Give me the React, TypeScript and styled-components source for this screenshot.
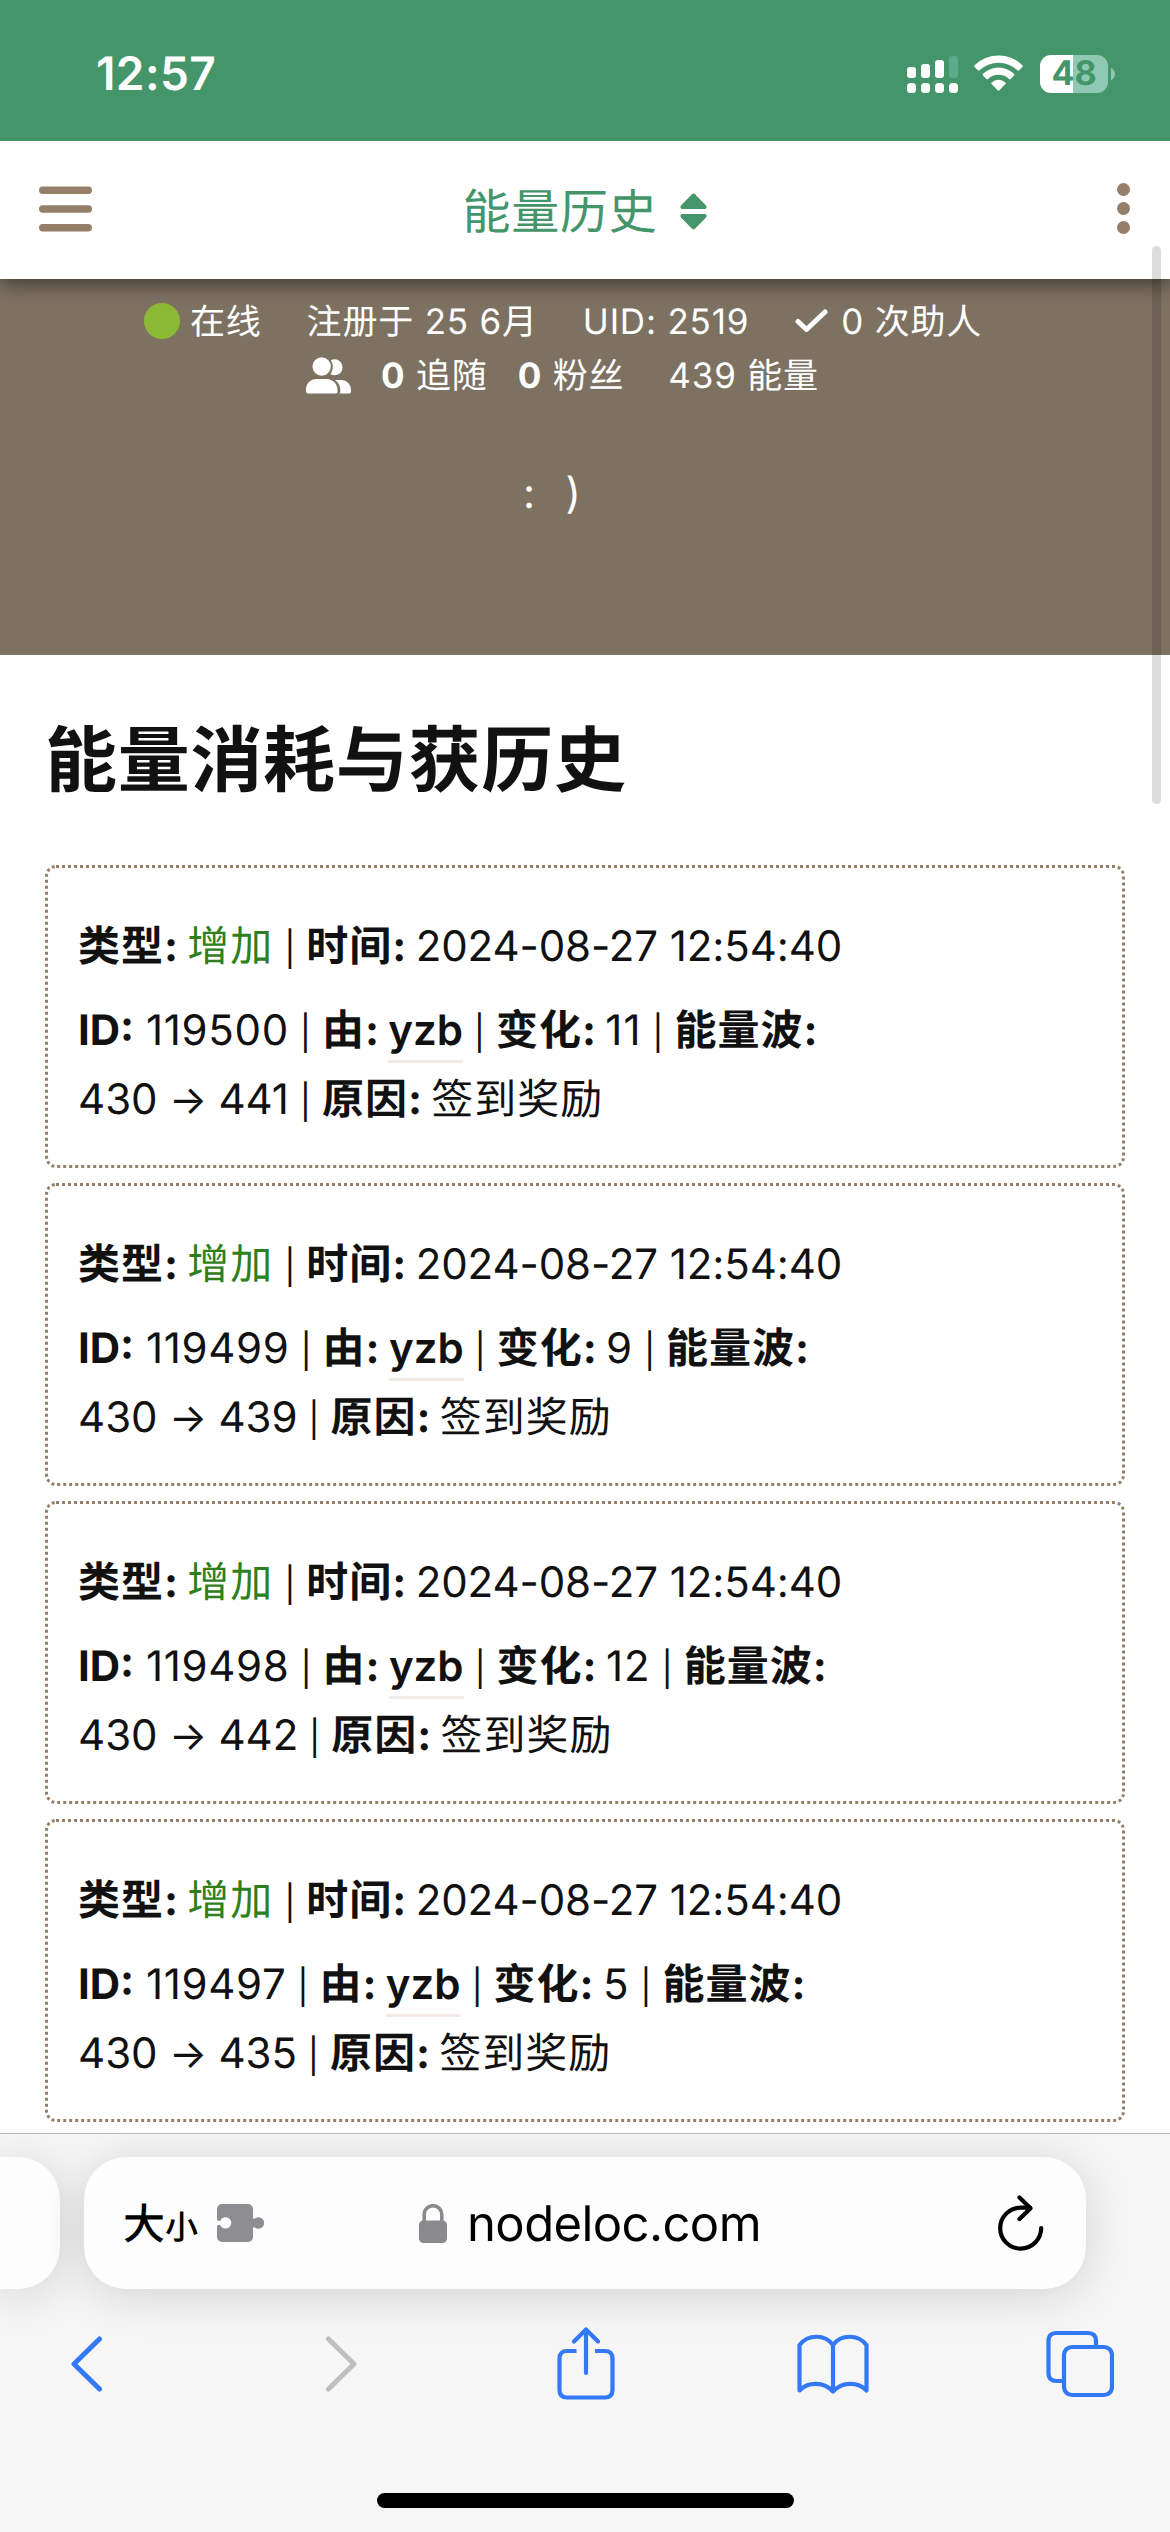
import React from "react";
import styled, { createGlobalStyle } from "styled-components";

const GlobalStyle = createGlobalStyle`
  *, *::before, *::after { box-sizing: border-box; }
  body {
    margin: 0;
    background: #fff;
    font-family: Inter, "Noto Sans CJK SC", sans-serif;
    color: #111;
    text-rendering: geometricPrecision;
  }
  p, h1 { margin: 0; }
`;

const Screen = styled.div`
  position: relative;
  width: 1170px;
  height: 2532px;
  overflow: hidden;
  display: flex;
  flex-direction: column;
  background: #fff;
`;

const StatusBar = styled.header`
  flex: none;
  position: relative;
  z-index: 2;
  height: 141px;
  display: flex;
  align-items: center;
  justify-content: space-between;
  padding: 7px 55px 0 96px;
  background: #44966a;
  color: #fff;
`;

const Clock = styled.span`
  font-size: 46px;
  font-weight: 600;
  line-height: 54px;
  letter-spacing: 0.4px;
`;

const StatusIcons = styled.div`
  display: flex;
  align-items: center;
`;

const WifiGlyph = styled.svg`
  margin-left: 16px;
`;

const Battery = styled.div`
  display: flex;
  align-items: center;
  gap: 3px;
  margin-left: 17px;
`;

const BatteryBody = styled.div<{ $level: number }>`
  width: 68px;
  height: 38px;
  border-radius: 11px;
  background: linear-gradient(90deg, #fff ${(p) => p.$level}%, #8fc9b3 ${(p) => p.$level}%);
  color: #44966a;
  font-size: 34px;
  font-weight: 700;
  line-height: 38px;
  text-align: center;
`;

const TopBar = styled.nav`
  flex: none;
  position: relative;
  z-index: 1;
  height: 138px;
  display: grid;
  grid-template-columns: 1fr auto 1fr;
  align-items: center;
  padding: 0 40px 0 39px;
  background: #fff;
  box-shadow: 0 6px 18px rgba(0, 0, 0, 0.45);
`;

const MenuIcon = styled.svg`
  margin-bottom: 3px;
`;

const MoreIcon = styled.svg`
  justify-self: end;
  margin-bottom: 3px;
`;

const PageTitle = styled.div`
  display: flex;
  align-items: center;
  gap: 22px;
  padding-top: 3px;
  color: #44966a;
  font-size: 48px;
  line-height: 72px;
  letter-spacing: 0.8px;
`;

const Profile = styled.section`
  flex: none;
  height: 376px;
  padding-top: 15px;
  background: #7d7162;
  color: #fff;
  font-size: 35px;
  line-height: 54px;
  letter-spacing: 0.8px;
`;

const ProfileRow = styled.div<{ $left: number }>`
  display: flex;
  align-items: center;
  height: 54px;
  padding-left: ${(p) => p.$left}px;
  white-space: pre;
`;

const Stat = styled.span<{ $gap?: number }>`
  margin-left: ${(p) => p.$gap ?? 0}px;
  padding-top: 2px;
  b { font-weight: 700; }
`;

const OnlineDot = styled.i`
  width: 36px;
  height: 36px;
  margin-right: 10px;
  border-radius: 50%;
  background: #8cb935;
`;

const CheckGlyph = styled.svg`
  margin: 0 13px 0 46px;
`;

const Signature = styled.p`
  padding: 65px 0 0 523px;
  font-size: 42px;
  line-height: 54px;
  word-spacing: 17px;
`;

const Content = styled.main`
  flex: 1;
  min-height: 0;
  padding: 0 45px;
`;

const Heading = styled.h1`
  padding-top: 52px;
  height: 210px;
  font-size: 72px;
  font-weight: 600;
  line-height: 108px;
  letter-spacing: 0.7px;
`;

const Records = styled.div`
  display: flex;
  flex-direction: column;
  gap: 15px;
`;

const Card = styled.article`
  height: 303px;
  padding: 44px 30px;
  border: 3px dotted #957f68;
  border-radius: 11px;
  display: flex;
  flex-direction: column;
  gap: 15px;
`;

const Line = styled.p`
  font-size: 42px;
  line-height: 69px;
  white-space: pre;
`;

const Row = styled.span`
  display: block;
  height: 69px;
`;

const Label = styled.b<{ $latin?: boolean }>`
  font-weight: 700;
  letter-spacing: ${(p) => (p.$latin ? 0 : 1)}px;
  margin-right: ${(p) => (p.$latin ? 0 : -3.5)}px;
`;

const Value = styled.span<{ $spacing: number }>`
  letter-spacing: ${(p) => p.$spacing}px;
`;

const Kind = styled(Value)`
  color: #2f7f1c;
`;

const BarText = styled.span`
  display: inline-block;
  width: 33px;
  font-size: 34px;
  line-height: 40px;
  text-align: center;
`;

const Arrow = styled.span`
  font-size: 40px;
  margin: 0 -0.5px;
`;

const User = styled.a`
  font-weight: 600;
  padding-bottom: 4px;
  border-bottom: 3px solid #f3e9e5;
`;

const Scrollbar = styled.div`
  position: absolute;
  z-index: 2;
  top: 246px;
  left: 1152px;
  width: 9px;
  height: 558px;
  border-radius: 5px;
  background: rgba(0, 0, 0, 0.135);
`;

const BrowserBar = styled.footer`
  flex: none;
  position: relative;
  height: 399px;
  overflow: hidden;
  border-top: 1px solid #b8b8b8;
  background: #f6f6f6;
  display: flex;
  flex-direction: column;
`;

const AddressRow = styled.div`
  display: flex;
  gap: 24px;
  padding-top: 23px;
`;

const Pill = styled.div`
  height: 132px;
  border-radius: 42px;
  background: #fdfdfd;
  box-shadow: 0 6px 46px rgba(0, 0, 0, 0.15);
`;

const PreviousTab = styled(Pill)`
  width: 60px;
  border-radius: 0 42px 42px 0;
`;

const Address = styled(Pill)`
  width: 1002px;
  display: flex;
  align-items: center;
  padding: 0 42px 0 39px;
`;

const TextSize = styled.span`
  display: flex;
  align-items: baseline;
  width: 94px;
  font-family: "Noto Sans CJK SC", sans-serif;
  font-size: 42px;
  font-weight: 500;
  line-height: 60px;
  color: #000;
  small { font-size: 33px; }
`;

const Host = styled.span`
  flex: 1;
  display: flex;
  align-items: center;
  gap: 20px;
  margin-left: 154px;
  font-size: 49px;
  line-height: 60px;
  letter-spacing: -0.6px;
  color: #000;
`;

const HostName = styled.span`
  padding-top: 2px;
`;

const Toolbar = styled.div`
  display: flex;
  align-items: center;
  height: 80px;
  margin-top: 35px;
`;

const Tool = styled.svg<{ $gap: number }>`
  flex: none;
  margin-left: ${(p) => p.$gap}px;
  fill: none;
  stroke: #3379f7;
  stroke-linejoin: round;
`;

const ForwardTool = styled(Tool)`
  stroke: #bfbfbf;
`;

const HomeIndicator = styled.div`
  width: 417px;
  height: 15px;
  margin: 89px auto 0;
  border-radius: 8px;
  background: #000;
`;

const records = [
  { id: 119500, change: 11, after: 441 },
  { id: 119499, change: 9, after: 439 },
  { id: 119498, change: 12, after: 442 },
  { id: 119497, change: 5, after: 435 },
];

const Bar = () => <BarText>|</BarText>;

const SignalIcon = () => (
  <svg width="51" height="38" viewBox="0 0 51 38" fill="#fff">
    <rect x="0" y="12" width="9" height="11" rx="3" />
    <rect x="14" y="9" width="9" height="14" rx="3" />
    <rect x="28" y="5" width="9" height="18" rx="3" />
    <rect x="42" y="1" width="9" height="22" rx="3" fill="#5aab87" />
    {[0, 14, 28, 42].map((x) => (
      <rect key={x} x={x} y="28" width="9" height="10" rx="3.5" />
    ))}
  </svg>
);

const WifiIcon = () => (
  <WifiGlyph width="49" height="38" viewBox="0 0 49 38" fill="#fff">
    <path d="M.6 10.200a34.500 34.500 0 0 1 47.800 0q.9.900 0 1.800l-3.300 3.300q-.8.800-1.600 0a27.500 27.500 0 0 0-38 0q-.8.800-1.600 0L.6 12q-.9-.9 0-1.800z" />
    <path d="M9 18.800a22.500 22.500 0 0 1 31 0q.8.900 0 1.700l-3.400 3.400q-.8.700-1.600 0a15.300 15.300 0 0 0-21 0q-.8.700-1.600 0L9 20.500q-.8-.8 0-1.700z" />
    <path d="M17.600 27.400a10.200 10.200 0 0 1 13.800 0q.8.800 0 1.700l-6 6.200q-.9.900-1.800 0l-6-6.200q-.8-.9 0-1.700z" />
  </WifiGlyph>
);

const CheckIcon = () => (
  <CheckGlyph width="33" height="24" viewBox="0 0 33 24">
    <path d="M3 12.500 11.500 20.500 30 3" fill="none" stroke="#fff" strokeWidth="5" strokeLinecap="round" strokeLinejoin="round" />
  </CheckGlyph>
);

const FriendsIcon = () => (
  <svg width="45" height="37" viewBox="0 0 45 37" fill="#fff">
    <circle cx="15.700" cy="9.500" r="9.200" />
    <path d="M0 34v-1.500C0 26.500 4.500 22 10.500 22h10C27 22 31.500 27 31.500 33v1.500c0 1.200-.6 2-1.800 2H2.200C.8 36.500 0 35.500 0 34z" />
    <path d="M24.500 17.200c3-4.500 3-10 .3-14A8 8 0 1 1 24.500 17.200z" />
    <path d="M29 23h6c6 0 10 4.500 10 10v1.500c0 1.200-.8 2-2 2h-9.500c.6-.8.900-1.500.9-2.500 0-4.500-1.500-8.200-5.400-11z" />
  </svg>
);

export default function App() {
  return (
    <Screen>
      <GlobalStyle />
      <StatusBar>
        <Clock>12:57</Clock>
        <StatusIcons>
          <SignalIcon />
          <WifiIcon />
          <Battery>
            <BatteryBody $level={48}>48</BatteryBody>
            <svg width="4" height="12" viewBox="0 0 4 12">
              <path d="M0 0c2.500 1 4 3.500 4 6s-1.500 5-4 6z" fill="#8fc9b3" />
            </svg>
          </Battery>
        </StatusIcons>
      </StatusBar>

      <TopBar>
        <MenuIcon width="53" height="46" viewBox="0 0 53 46" fill="#957f68">
          <rect y="0.500" width="53" height="7.500" rx="3.700" />
          <rect y="19.200" width="53" height="7.500" rx="3.700" />
          <rect y="38" width="53" height="7.500" rx="3.700" />
        </MenuIcon>
        <PageTitle>
          能量历史
          <svg width="27" height="37" viewBox="0 0 27 37" fill="#44966a">
            <path d="M1 12.500 12 1.200q1.500-1.400 3 0L26 12.500q1.500 3-1 3.500H2q-2.500-.5-1-3.500z" />
            <path d="M1 24.500 12 35.800q1.500 1.400 3 0L26 24.500q1.500-3-1-3.500H2q-2.500.5-1 3.500z" />
          </svg>
        </PageTitle>
        <MoreIcon width="13" height="51" viewBox="0 0 13 51" fill="#957f68">
          <circle cx="6.500" cy="6.500" r="6.500" />
          <circle cx="6.500" cy="25.500" r="6.500" />
          <circle cx="6.500" cy="44.500" r="6.500" />
        </MoreIcon>
      </TopBar>

      <Profile>
        <ProfileRow $left={144}>
          <OnlineDot />
          <Stat>在线</Stat>
          <Stat $gap={45}>注册于 25 6月</Stat>
          <Stat $gap={45}>UID: 2519</Stat>
          <CheckIcon />
          <Stat>0 次助人</Stat>
        </ProfileRow>
        <ProfileRow $left={306}>
          <FriendsIcon />
          <Stat $gap={30}><b>0</b> 追随</Stat>
          <Stat $gap={30}><b>0</b> 粉丝</Stat>
          <Stat $gap={44}>439 能量</Stat>
        </ProfileRow>
        <Signature>: )</Signature>
      </Profile>

      <Content>
        <Heading>能量消耗与获历史</Heading>
        <Records>
          {records.map((r) => (
            <Card key={r.id}>
              <Line>
                <Label>类型:</Label> <Kind $spacing={1}>增加</Kind><Bar /><Label>时间:</Label>{" "}
                <Value $spacing={-0.1}>2024-08-27 12:54:40</Value>
              </Line>
              <Line>
                <Row>
                  <Label $latin>ID:</Label> <Value $spacing={0.7}>{r.id}</Value><Bar /><Label>由:</Label>{" "}
                  <User>yzb</User><Bar /><Label>变化:</Label> <Value $spacing={1}>{r.change}</Value><Bar />
                  <Label>能量波:</Label>
                </Row>
                <Row>
                  430 <Arrow>→</Arrow> {r.after}<Bar /><Label>原因:</Label> <Value $spacing={1}>签到奖励</Value>
                </Row>
              </Line>
            </Card>
          ))}
        </Records>
      </Content>

      <BrowserBar>
        <AddressRow>
          <PreviousTab />
          <Address>
            <TextSize>大<small>小</small></TextSize>
            <svg width="48" height="38" viewBox="0 0 48 38" fill="#8e8d92">
              <path d="M5 0h26a5 5 0 0 1 5 5v9.500l1.500.2a5.800 5.800 0 1 1 0 8.600l-1.500.2V33a5 5 0 0 1-5 5H5a5 5 0 0 1-5-5V22q1.500-2.200 3.500-.6a5.700 5.700 0 1 0 0-5Q1.500 18 0 15.800V5a5 5 0 0 1 5-5z" />
            </svg>
            <Host>
              <svg width="28" height="39" viewBox="0 0 28 39">
                <rect x="0" y="16.500" width="28" height="22.500" rx="4.500" fill="#8a898e" />
                <path d="M5.200 19v-8.500a8.800 8.800 0 0 1 17.600 0V19" fill="none" stroke="#8a898e" strokeWidth="3.600" />
              </svg>
              <HostName>nodeloc.com</HostName>
            </Host>
            <svg width="46" height="56" viewBox="0 0 46 56" fill="none" stroke="#000" strokeWidth="4.200" strokeLinecap="round" strokeLinejoin="round">
              <path d="M43.200 33A20.500 20.500 0 1 1 22.700 12.600H32" />
              <path d="M21.500 2.500 32.500 13.200 21.500 24" />
            </svg>
          </Address>
        </AddressRow>
        <Toolbar>
          <Tool $gap={69} width="34" height="58" viewBox="0 0 34 58" strokeWidth="5" strokeLinecap="round">
            <path d="M30.500 4 5 29 30.500 54" />
          </Tool>
          <ForwardTool $gap={222} width="34" height="58" viewBox="0 0 34 58" strokeWidth="5" strokeLinecap="round">
            <path d="M3.500 4 29 29 3.500 54" />
          </ForwardTool>
          <Tool $gap={198} width="58" height="74" viewBox="0 0 58 74" strokeWidth="4.200">
            <path d="M19.500 24H10Q2.500 24 2.500 31.500V63Q2.500 70.500 10 70.500H48Q55.500 70.500 55.500 63V31.500Q55.500 24 48 24H38" />
            <path d="M29 46V3M17 14.500 29 2.500 41 14.500" strokeLinecap="round" />
          </Tool>
          <Tool $gap={182} width="72" height="60" viewBox="0 0 72 60" strokeWidth="4.200">
            <path d="M36 11C28 0 11 0 2.500 11V56.500C11 47.500 27 47.500 36 57.500 45 47.500 61 47.500 69.500 56.500V11C61 0 44 0 36 11zV57.500" />
          </Tool>
          <Tool $gap={177} width="68" height="68" viewBox="0 0 68 68" strokeWidth="4.200">
            <path d="M16 51H10.500Q2.500 51 2.500 43V11Q2.500 3 10.500 3H42Q50 3 50 11V17" />
            <rect x="18" y="17" width="48" height="48" rx="8" />
          </Tool>
        </Toolbar>
        <HomeIndicator />
      </BrowserBar>
      <Scrollbar />
    </Screen>
  );
}
